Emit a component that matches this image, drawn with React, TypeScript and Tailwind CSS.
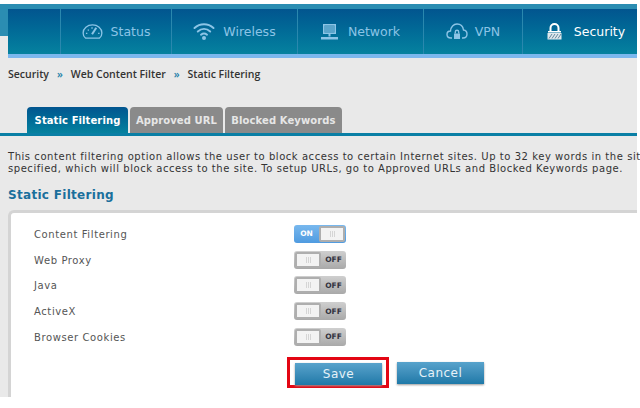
const bodyFont = "font-['DejaVu_Sans',sans-serif]";

function GaugeIcon() {
  return (
    <svg width="21" height="15" viewBox="0 0 22 16" fill="none" stroke="#8cc4e6" strokeWidth="1.4">
      <path d="M3.5 15 C1.5 13.5 1 11.5 1 9.5 C1 4.5 5.5 1 11 1 C16.5 1 21 4.5 21 9.5 C21 11.5 20.5 13.5 18.5 15 Z" />
      <path d="M10.5 11 L15 4" strokeWidth="2.2" />
      <path d="M4 10h1.5M6 6l1 1M10.5 3.5v1.5M17 10h1.5" />
    </svg>
  );
}

function WifiIcon() {
  return (
    <svg width="22" height="19" viewBox="0 0 22 18" fill="none" stroke="#8cc4e6" strokeWidth="2" strokeLinecap="round">
      <path d="M1.5 5.5 C7 0.5 15 0.5 20.5 5.5" />
      <path d="M4.8 9 C8.5 5.8 13.5 5.8 17.2 9" />
      <path d="M8 12.2 C9.8 10.8 12.2 10.8 14 12.2" />
      <circle cx="11" cy="15.5" r="2" fill="#8cc4e6" stroke="none" />
    </svg>
  );
}

function NetworkIcon() {
  return (
    <svg width="17" height="16" viewBox="0 0 17 16" fill="#8cc4e6">
      <path d="M2 0h13v10H2z M3.5 1.5v7h10v-7z" fillRule="evenodd" />
      <path d="M3.5 1.5h10v7h-10z" opacity="0.65" />
      <path d="M7.5 10h2v2.5h-2z" />
      <path d="M0 13h17v2.5H0z" />
    </svg>
  );
}

function CloudLockIcon() {
  return (
    <svg width="22" height="17" viewBox="0 0 22 17" fill="none" stroke="#8cc4e6" strokeWidth="1.4">
      <path d="M6 15 H5 C2.5 15 1 13.5 1 11.5 C1 9.5 2.5 8 4.5 8 C4.8 4 7.5 1 11 1 C14.5 1 17 3.5 17.5 7 C19.5 7.2 21 9 21 11 C21 13.3 19.3 15 17 15 H16" />
      <path d="M8 10.5h6v5.5H8z" fill="#8cc4e6" stroke="none" />
      <path d="M9.3 10.5V9a1.7 1.7 0 0 1 3.4 0v1.5" />
    </svg>
  );
}

function LockIcon() {
  return (
    <svg width="15" height="17" viewBox="0 0 15 17" fill="none">
      <path d="M3.5 8V5a4 4 0 0 1 8 0v3" stroke="#ffffff" strokeWidth="2" />
      <path d="M1 8h13v1.5H1z" fill="#ffffff" />
      <path d="M0.5 10h14v6.5H0.5z" fill="#dfe8ec" />
      <path d="M2 15.5 L5 11 M5 15.5 L8 11 M8 15.5 L11 11 M11 15.5 L14 11" stroke="#44708a" strokeWidth="0.8" />
    </svg>
  );
}

function NavItem({ icon, label, width, gap }: { icon: React.ReactNode; label: string; width: string; gap: string }) {
  return (
    <div className={`flex h-full items-center justify-center border-r border-[#2a88ae] ${gap} ${width}`}>
      {icon}
      <span className="mt-[1px] text-[12.5px] text-[#8cc4e6]">{label}</span>
    </div>
  );
}

function Toggle({ on }: { on?: boolean }) {
  const knob = (
    <div className="flex h-[16px] w-[26px] items-center justify-center gap-[1px] rounded-[2px] border-2 border-[#aeaeae] bg-[#f3f3f3]">
      <span className="h-[6px] w-px bg-[#d5d5d5]" />
      <span className="h-[6px] w-px bg-[#d5d5d5]" />
      <span className="h-[6px] w-px bg-[#d5d5d5]" />
    </div>
  );
  if (on) {
    return (
      <div className="flex h-[18px] w-[52px] items-center justify-between rounded-[3px] bg-gradient-to-b from-[#78b8ee] to-[#4f9be0] pr-px">
        <span className="w-[25px] text-center text-[7.5px] font-bold text-white">ON</span>
        {knob}
      </div>
    );
  }
  return (
    <div className="flex h-[18px] w-[52px] items-center justify-between rounded-[3px] bg-gradient-to-b from-[#cfcfcf] to-[#a9a9a9] pl-px">
      {knob}
      <span className="w-[25px] text-center text-[7.5px] font-bold text-[#33333f]">OFF</span>
    </div>
  );
}

function Row({ label, on }: { label: string; on?: boolean }) {
  return (
    <div className="flex h-[25.75px] items-center">
      <span className="mt-[1px] w-[260px] text-[10px] tracking-[0.6px] text-[#555555]">{label}</span>
      <Toggle on={on} />
    </div>
  );
}

export default function App() {
  return (
    <div className={`flex h-[408px] w-[640px] flex-col overflow-hidden bg-white ${bodyFont}`}>
      <div className="h-[4px]" />
      <div className="flex h-[393px] w-[637px] flex-col bg-[#e9e9e9]">
        <div className="h-[54px] bg-[linear-gradient(to_bottom,#2b8db2_0px,#2b8db2_32px,#e9e9e9_32px)] pl-[8px]">
          <div className="h-[5px]" />
          <div className="flex h-[45px] bg-gradient-to-b from-[#02558f] to-[#06829f] pl-[52px]">
            <div className="h-full border-l border-[#2a88ae]" />
            <NavItem icon={<GaugeIcon />} label="Status" width="w-[111px]" gap="gap-[8px]" />
            <NavItem icon={<WifiIcon />} label="Wireless" width="w-[126px]" gap="gap-[8px]" />
            <NavItem icon={<NetworkIcon />} label="Network" width="w-[126px]" gap="gap-[10px]" />
            <NavItem icon={<CloudLockIcon />} label="VPN" width="w-[99px]" gap="gap-[7px]" />
            <div className="flex h-full flex-1 items-center justify-center gap-[12px] pl-[12px]">
              <LockIcon />
              <span className="mt-[1px] text-[12.5px] text-white">Security</span>
            </div>
          </div>
          <div className="h-[4px] bg-[#7cb8ee]" />
        </div>

        <div className="mt-[4px] flex h-[26px] items-center gap-[8px] pl-[8px] font-['Open_Sans',sans-serif] text-[10.5px] font-semibold text-[#333333]">
          <span>Security</span>
          <span className="text-[#1a7fa8]">»</span>
          <span>Web Content Filter</span>
          <span className="text-[#1a7fa8]">»</span>
          <span>Static Filtering</span>
        </div>

        <div className="mt-[19px] flex h-[26px] gap-[2px] pl-[27px] text-[10px] font-bold tracking-[0.1px] whitespace-nowrap text-[#e6e6e6]">
          <div className="flex w-[101px] items-center justify-center rounded-t-[4px] bg-gradient-to-b from-[#02558f] to-[#06829f] text-white">Static Filtering</div>
          <div className="flex w-[93px] items-center justify-center rounded-t-[4px] bg-[#8a8a8a]">Approved URL</div>
          <div className="flex w-[117px] items-center justify-center rounded-t-[4px] bg-[#8a8a8a]">Blocked Keywords</div>
        </div>
        <div className="h-[3px] bg-[#0a7fa5]" />

        <div className="mt-[15px] whitespace-nowrap pl-[8px] text-[10px] leading-[12px] tracking-[0.55px] text-[#333333]">
          <p>This content filtering option allows the user to block access to certain Internet sites. Up to 32 key words in the sit</p>
          <p>specified, which will block access to the site. To setup URLs, go to Approved URLs and Blocked Keywords page.</p>
        </div>

        <h2 className="mt-[12px] pl-[8px] text-[12px] font-bold leading-[16px] tracking-[0.3px] text-[#1a6f9c]">Static Filtering</h2>

        <div className="ml-[8px] mt-[7px] flex-1 rounded-tl-[6px] border-l-[3px] border-t-[3px] border-[#d4d4d4] bg-white pl-[23px] pt-[8px]">
          <Row label="Content Filtering" on />
          <Row label="Web Proxy" />
          <Row label="Java" />
          <Row label="ActiveX" />
          <Row label="Browser Cookies" />
          <div className="mt-[7px] flex items-end pl-[253px]">
            <div className="border-[3px] border-[#e30613] pl-[5px] pr-[4px] pt-[3px]">
              <button className="block h-[22px] w-[87px] bg-gradient-to-b from-[#58a3cc] to-[#1d79a8] text-[12px] tracking-[0.5px] text-[#e6f2f8] shadow-[0_1px_2px_#999]">Save</button>
            </div>
            <button className="mb-[4px] ml-[8px] h-[22px] w-[87px] bg-gradient-to-b from-[#58a3cc] to-[#1d79a8] text-[12px] tracking-[0.5px] text-[#e6f2f8] shadow-[0_1px_2px_#999]">Cancel</button>
          </div>
        </div>
      </div>
    </div>
  );
}
